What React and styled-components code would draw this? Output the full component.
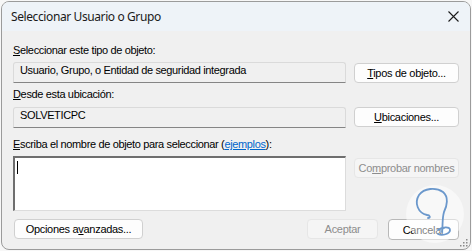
import styled, { createGlobalStyle } from "styled-components";

const Global = createGlobalStyle`
  html, body {
    margin: 0;
    padding: 0;
    background: #f7f7f7;
  }
  body {
    padding: 1px 0 0 1px;
    font-family: "Liberation Sans", Arial, sans-serif;
  }
`;

const Window = styled.div`
  position: relative;
  width: 468px;
  height: 247px;
  border: 1px solid #9b9b9b;
  border-radius: 8px;
  overflow: hidden;
  background: #f0f0f0;
  display: flex;
  flex-direction: column;
`;

const TitleBar = styled.div`
  height: 29px;
  flex: none;
  background: #eef3f8;
  display: flex;
  align-items: center;
  justify-content: space-between;
  padding: 0 10px 0 9px;
`;

const Title = styled.span`
  font-family: "Noto Sans", "Segoe UI", sans-serif;
  font-size: 12px;
  letter-spacing: -0.4px;
  color: #1a1a1a;
`;

const Close = styled.svg`
  width: 11px;
  height: 11px;
  margin-right: 1px;
`;

const Body = styled.div`
  flex: 1;
  padding: 12px 11px 0 11px;
  display: grid;
  grid-template-columns: 333px 105px;
  column-gap: 8px;
  align-content: start;
  font-size: 11px;
  letter-spacing: -0.35px;
  color: #000;
`;

const Label = styled.div`
  grid-column: 1 / -1;
  height: 14px;
  line-height: 14px;
  margin-top: ${(p) => p.$top || 0}px;
  margin-bottom: ${(p) => p.$bottom || 5}px;
  white-space: nowrap;
`;

const Field = styled.div`
  height: 21px;
  box-sizing: border-box;
  border: 1px solid #dadada;
  border-bottom-color: #858585;
  border-radius: 3px 3px 0 0;
  background: #f0f0f0;
  padding: 0 6px;
  line-height: 15px;
  white-space: nowrap;
  overflow: hidden;
`;

const Button = styled.button`
  height: ${(p) => p.$h || 20}px;
  width: ${(p) => (p.$w ? p.$w + "px" : "auto")};
  box-sizing: border-box;
  border: 1px solid ${(p) => (p.disabled ? "#e6e6e6" : p.$strong ? "#b8b8b8" : "#d0d0d0")};
  border-radius: 4px;
  background: ${(p) => (p.disabled ? "#f5f5f5" : "#fdfdfd")};
  color: ${(p) => (p.disabled ? "#8d8d8d" : "#000")};
  font-family: "Liberation Sans", Arial, sans-serif;
  font-size: 11px;
  letter-spacing: -0.3px;
  white-space: nowrap;
  padding: 0;
  margin-top: ${(p) => p.$top || 0}px;
  align-self: start;
`;

const TextArea = styled.div`
  height: 55px;
  box-sizing: border-box;
  background: #fff;
  border-top: 2px solid #6e6e6e;
  border-left: 2px solid #6e6e6e;
  border-right: 1px solid #dcdcdc;
  border-bottom: 1px solid #dcdcdc;
  padding: 3px 2px;
`;

const Caret = styled.div`
  width: 1px;
  height: 13px;
  background: #000;
`;

const Link = styled.a`
  color: #0066cc;
  text-decoration: underline;
`;

const Footer = styled.div`
  grid-column: 1 / -1;
  display: flex;
  align-items: center;
  margin-top: 8px;
  padding-left: 1px;
`;

const Spacer = styled.div`
  flex: 1;
`;

const Gap = styled.div`
  width: 10px;
`;

const Watermark = styled.svg`
  position: absolute;
  left: 403px;
  top: 182px;
  width: 60px;
  height: 60px;
  pointer-events: none;
`;

const Grip = styled.svg`
  position: absolute;
  right: 1px;
  bottom: 1px;
  width: 10px;
  height: 10px;
`;

export default function App() {
  return (
    <>
      <Global />
      <Window>
        <TitleBar>
          <Title>Seleccionar Usuario o Grupo</Title>
          <Close viewBox="0 0 11 11">
            <path d="M0.5 0.5 L10.5 10.5 M10.5 0.5 L0.5 10.5" stroke="#1b1b1b" strokeWidth="1.1" />
          </Close>
        </TitleBar>
        <Body>
          <Label>
            <u>S</u>eleccionar este tipo de objeto:
          </Label>
          <Field>Usuario, Grupo, o Entidad de seguridad integrada</Field>
          <Button $top={1}>
            <u>T</u>ipos de objeto...
          </Button>

          <Label $top={4} $bottom={6}>
            <u>D</u>esde esta ubicación:
          </Label>
          <Field>SOLVETICPC</Field>
          <Button $top={0}>
            <u>U</u>bicaciones...
          </Button>

          <Label $top={9} $bottom={5}>
            <u>E</u>scriba el nombre de objeto para seleccionar (<Link>ejemplos</Link>):
          </Label>
          <TextArea>
            <Caret />
          </TextArea>
          <Button disabled $top={2}>
            Co<u>m</u>probar nombres
          </Button>

          <Footer>
            <Button $w={129}>
              Opciones a<u>v</u>anzadas...
            </Button>
            <Spacer />
            <Button disabled $w={71}>
              Aceptar
            </Button>
            <Gap />
            <Button $w={71} $h={21} $strong>
              Cancelar
            </Button>
          </Footer>
        </Body>
        <Watermark viewBox="0 0 60 60">
          <circle cx="30" cy="30" r="29" fill="rgba(255,255,255,0.5)" />
          <path
            d="M22 31 C13 29 9 19 14 11 C19 4 31 3 38 8 C44 13 42 22 39 28 C37 35 38 41 37 48
               M33 46 C37 43 45 42 45 46 C45 50 37 52 33 50
               M22 31 C25 31 26 34 23 34"
            fill="none"
            stroke="#6b98cc"
            strokeWidth="1.8"
            strokeLinecap="round"
          />
        </Watermark>
        <Grip viewBox="0 0 10 10">
          <g fill="#8a8a8a">
            <rect x="7" y="1" width="1.5" height="1.5" />
            <rect x="4" y="4" width="1.5" height="1.5" />
            <rect x="7" y="4" width="1.5" height="1.5" />
            <rect x="1" y="7" width="1.5" height="1.5" />
            <rect x="4" y="7" width="1.5" height="1.5" />
            <rect x="7" y="7" width="1.5" height="1.5" />
          </g>
        </Grip>
      </Window>
    </>
  );
}
